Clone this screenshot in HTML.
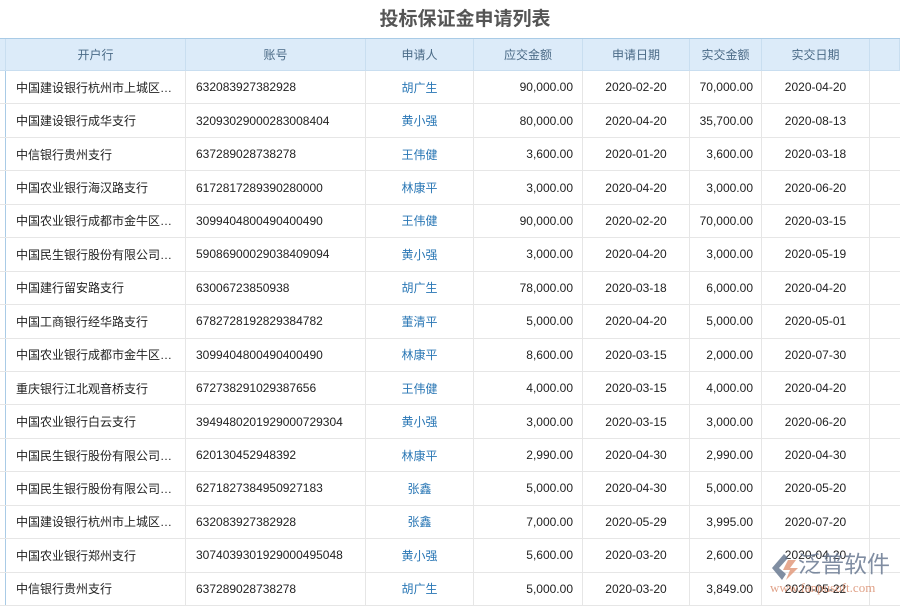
<!DOCTYPE html>
<html><head><meta charset="utf-8"><style>
*{margin:0;padding:0;box-sizing:border-box}
body{width:900px;height:600px;overflow:hidden;background:#fff;font-family:"Liberation Sans","Noto Sans CJK SC",sans-serif;font-size:12px;color:#222;position:relative}
.title{position:absolute;top:4px;left:0;width:930px;text-align:center;font-size:19px;font-weight:bold;color:#555}
.grid{position:absolute;top:38px;left:0;width:900px}
.row{display:flex;height:33.45px;border-bottom:1px solid #e6e6e6}
.hd{height:33px;background:#dcebf9;border-top:1px solid #a9cbe6;border-bottom:1px solid #c9def0;color:#4a6a86}
.c{border-right:1px solid #e6e6e6;display:flex;align-items:center;white-space:nowrap;overflow:hidden}
.hd .c{border-right:1px solid #c9def0;justify-content:center}
.c0{width:6px;border-right:1px solid #a9cbe6}
.c1{width:180px;padding-left:10px}
.c2{width:180px;padding-left:10px}
.c3{width:108px;justify-content:center;color:#2a77b5}
.c4{width:109px;justify-content:flex-end;padding-right:9px}
.c5{width:107px;justify-content:center}
.c6{width:72px;justify-content:flex-end;padding-right:8px}
.c7{width:108px;justify-content:center}
.c8{width:30px;border-right:none}
.logo{position:absolute;left:798px;top:551px;font-size:23px;line-height:26px;color:#6a7a92;white-space:nowrap;opacity:.85}
.url{position:absolute;left:770px;top:580px;font-size:13px;color:#d98a6a;font-family:"Liberation Serif",serif;opacity:.8;white-space:nowrap}
</style></head><body>
<div class="title">投标保证金申请列表</div>
<div class="grid">
<div class="row hd"><div class="c c0"></div><div class="c c1" style="padding:0">开户行</div><div class="c c2" style="padding:0">账号</div><div class="c c3" style="color:#4a6a86">申请人</div><div class="c c4" style="padding:0">应交金额</div><div class="c c5">申请日期</div><div class="c c6" style="padding:0">实交金额</div><div class="c c7">实交日期</div><div class="c c8"></div></div>
<div class="row"><div class="c c0"></div><div class="c c1">中国建设银行杭州市上城区…</div><div class="c c2">632083927382928</div><div class="c c3">胡广生</div><div class="c c4">90,000.00</div><div class="c c5">2020-02-20</div><div class="c c6">70,000.00</div><div class="c c7">2020-04-20</div><div class="c c8"></div></div>
<div class="row"><div class="c c0"></div><div class="c c1">中国建设银行成华支行</div><div class="c c2">32093029000283008404</div><div class="c c3">黄小强</div><div class="c c4">80,000.00</div><div class="c c5">2020-04-20</div><div class="c c6">35,700.00</div><div class="c c7">2020-08-13</div><div class="c c8"></div></div>
<div class="row"><div class="c c0"></div><div class="c c1">中信银行贵州支行</div><div class="c c2">637289028738278</div><div class="c c3">王伟健</div><div class="c c4">3,600.00</div><div class="c c5">2020-01-20</div><div class="c c6">3,600.00</div><div class="c c7">2020-03-18</div><div class="c c8"></div></div>
<div class="row"><div class="c c0"></div><div class="c c1">中国农业银行海汉路支行</div><div class="c c2">6172817289390280000</div><div class="c c3">林康平</div><div class="c c4">3,000.00</div><div class="c c5">2020-04-20</div><div class="c c6">3,000.00</div><div class="c c7">2020-06-20</div><div class="c c8"></div></div>
<div class="row"><div class="c c0"></div><div class="c c1">中国农业银行成都市金牛区…</div><div class="c c2">3099404800490400490</div><div class="c c3">王伟健</div><div class="c c4">90,000.00</div><div class="c c5">2020-02-20</div><div class="c c6">70,000.00</div><div class="c c7">2020-03-15</div><div class="c c8"></div></div>
<div class="row"><div class="c c0"></div><div class="c c1">中国民生银行股份有限公司…</div><div class="c c2">59086900029038409094</div><div class="c c3">黄小强</div><div class="c c4">3,000.00</div><div class="c c5">2020-04-20</div><div class="c c6">3,000.00</div><div class="c c7">2020-05-19</div><div class="c c8"></div></div>
<div class="row"><div class="c c0"></div><div class="c c1">中国建行留安路支行</div><div class="c c2">63006723850938</div><div class="c c3">胡广生</div><div class="c c4">78,000.00</div><div class="c c5">2020-03-18</div><div class="c c6">6,000.00</div><div class="c c7">2020-04-20</div><div class="c c8"></div></div>
<div class="row"><div class="c c0"></div><div class="c c1">中国工商银行经华路支行</div><div class="c c2">6782728192829384782</div><div class="c c3">董清平</div><div class="c c4">5,000.00</div><div class="c c5">2020-04-20</div><div class="c c6">5,000.00</div><div class="c c7">2020-05-01</div><div class="c c8"></div></div>
<div class="row"><div class="c c0"></div><div class="c c1">中国农业银行成都市金牛区…</div><div class="c c2">3099404800490400490</div><div class="c c3">林康平</div><div class="c c4">8,600.00</div><div class="c c5">2020-03-15</div><div class="c c6">2,000.00</div><div class="c c7">2020-07-30</div><div class="c c8"></div></div>
<div class="row"><div class="c c0"></div><div class="c c1">重庆银行江北观音桥支行</div><div class="c c2">672738291029387656</div><div class="c c3">王伟健</div><div class="c c4">4,000.00</div><div class="c c5">2020-03-15</div><div class="c c6">4,000.00</div><div class="c c7">2020-04-20</div><div class="c c8"></div></div>
<div class="row"><div class="c c0"></div><div class="c c1">中国农业银行白云支行</div><div class="c c2">3949480201929000729304</div><div class="c c3">黄小强</div><div class="c c4">3,000.00</div><div class="c c5">2020-03-15</div><div class="c c6">3,000.00</div><div class="c c7">2020-06-20</div><div class="c c8"></div></div>
<div class="row"><div class="c c0"></div><div class="c c1">中国民生银行股份有限公司…</div><div class="c c2">620130452948392</div><div class="c c3">林康平</div><div class="c c4">2,990.00</div><div class="c c5">2020-04-30</div><div class="c c6">2,990.00</div><div class="c c7">2020-04-30</div><div class="c c8"></div></div>
<div class="row"><div class="c c0"></div><div class="c c1">中国民生银行股份有限公司…</div><div class="c c2">6271827384950927183</div><div class="c c3">张鑫</div><div class="c c4">5,000.00</div><div class="c c5">2020-04-30</div><div class="c c6">5,000.00</div><div class="c c7">2020-05-20</div><div class="c c8"></div></div>
<div class="row"><div class="c c0"></div><div class="c c1">中国建设银行杭州市上城区…</div><div class="c c2">632083927382928</div><div class="c c3">张鑫</div><div class="c c4">7,000.00</div><div class="c c5">2020-05-29</div><div class="c c6">3,995.00</div><div class="c c7">2020-07-20</div><div class="c c8"></div></div>
<div class="row"><div class="c c0"></div><div class="c c1">中国农业银行郑州支行</div><div class="c c2">3074039301929000495048</div><div class="c c3">黄小强</div><div class="c c4">5,600.00</div><div class="c c5">2020-03-20</div><div class="c c6">2,600.00</div><div class="c c7">2020-04-20</div><div class="c c8"></div></div>
<div class="row"><div class="c c0"></div><div class="c c1">中信银行贵州支行</div><div class="c c2">637289028738278</div><div class="c c3">胡广生</div><div class="c c4">5,000.00</div><div class="c c5">2020-03-20</div><div class="c c6">3,849.00</div><div class="c c7">2020-05-22</div><div class="c c8"></div></div>
</div>
<svg style="position:absolute;left:770px;top:552px" width="30" height="30" viewBox="0 0 30 30"><path d="M14 2 L2 16 L12 28 L16 22 L9 16 L18 6Z" fill="#6a7a92" opacity=".85"/><path d="M18 8 L26 8 L20 16 L28 16 L16 28 L20 18 L13 18Z" fill="#e29a7c" opacity=".85"/></svg>
<div class="logo">泛普软件</div>
<div class="url">www.fanpusoft.com</div>
</body></html>
